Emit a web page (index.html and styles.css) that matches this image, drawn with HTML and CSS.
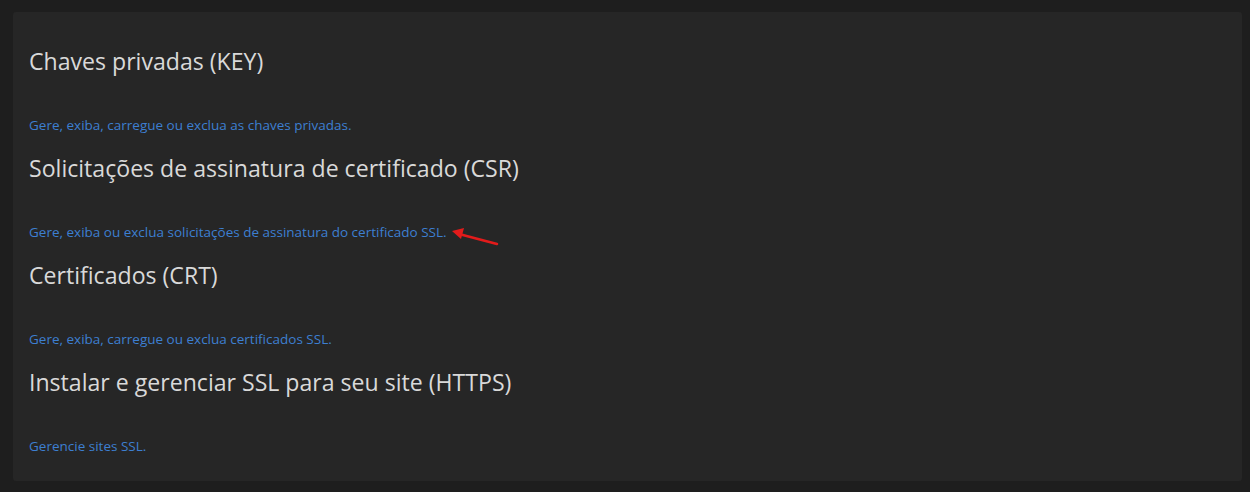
FILE: index.html
```html
<!DOCTYPE html>
<html lang="pt-BR">

<head>
  <meta charset="UTF-8">
  <meta name="viewport" content="width=device-width, initial-scale=1.0">
  <title>SSL/TLS</title>
  <link rel="stylesheet" href="styles.css">
</head>

<body>

  <div class="panel">
    <div class="section">
      <h2 class="section-title">Chaves privadas (KEY)</h2>
      <a class="section-link" href="#">Gere, exiba, carregue ou exclua as chaves privadas.</a>
    </div>
    <div class="section">
      <h2 class="section-title">Solicitações de assinatura de certificado (CSR)</h2>
      <a class="section-link" href="#">Gere, exiba ou exclua solicitações de assinatura do certificado SSL.</a>
      <!-- seta vermelha da anotação -->
      <svg class="arrow" width="50" height="22" viewBox="0 0 50 22">
        <line x1="8" y1="9" x2="46" y2="19" stroke="#e31b1b" stroke-width="2.5" stroke-linecap="round" />
        <polygon points="1,6 13,3 10,14" fill="#e31b1b" />
      </svg>
    </div>
    <div class="section">
      <h2 class="section-title">Certificados (CRT)</h2>
      <a class="section-link" href="#">Gere, exiba, carregue ou exclua certificados SSL.</a>
    </div>
    <div class="section">
      <h2 class="section-title">Instalar e gerenciar SSL para seu site (HTTPS)</h2>
      <a class="section-link" href="#">Gerencie sites SSL.</a>
    </div>
  </div>

</body>

</html>
```

FILE: styles.css
```css
body {
  margin: 0;
  padding: 12px 8px 11px 13px;
  background-color: #1e1e1e;
  font-family: "Open Sans", "Liberation Sans", sans-serif;
}

.panel {
  background-color: #262626;
  border-radius: 3px;
  padding: 34px 16px 26px 16px;
}

.section {
  position: relative;
  margin-bottom: 19px;
}

.section:last-child {
  margin-bottom: 0;
}

.section-title {
  margin: 0 0 40px 0;
  font-size: 23.1px;
  line-height: 30px;
  font-weight: 400;
  color: #d9d9d9;
}

.section-link {
  display: block;
  font-size: 13.5px;
  line-height: 18px;
  color: #3d7fd1;
  text-decoration: none;
}

.arrow {
  position: absolute;
  left: 422px;
  top: 72px;
}
```
